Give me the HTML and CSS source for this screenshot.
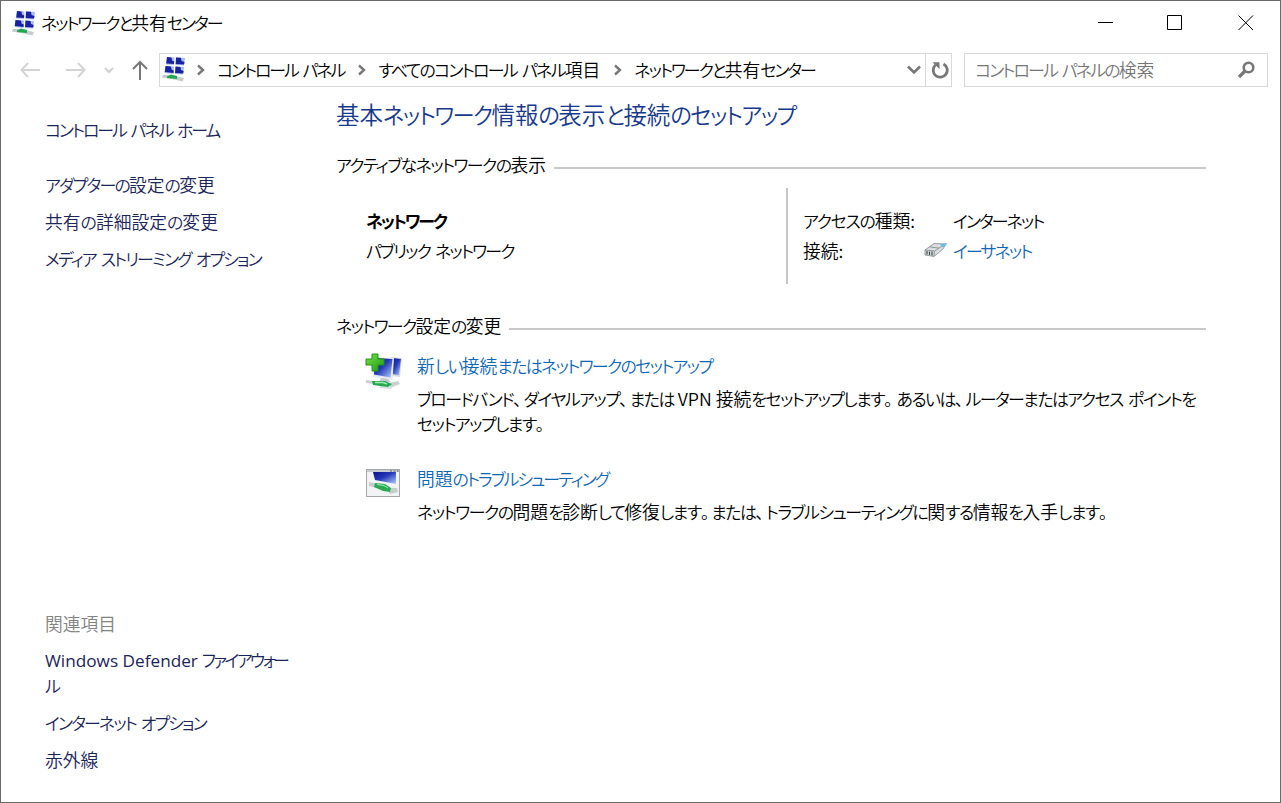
FILE: index.html
```html
<!DOCTYPE html>
<html lang="ja">
<head>
<meta charset="utf-8">
<title>ネットワークと共有センター</title>
<link rel="stylesheet" href="styles.css">
</head>
<body>
<!-- shared icon shapes -->
<svg width="0" height="0" class="defs">
  <defs>
    <linearGradient id="screen" x1="0" y1="0" x2="1" y2="1">
      <stop offset="0" stop-color="#0c1290"/>
      <stop offset=".45" stop-color="#2438b8"/>
      <stop offset="1" stop-color="#b4d0fa"/>
    </linearGradient>
    <linearGradient id="plus" x1="0" y1="0" x2="1" y2="1">
      <stop offset="0" stop-color="#7be04a"/>
      <stop offset="1" stop-color="#149a10"/>
    </linearGradient>
    <symbol id="netcenter" viewBox="0 0 24 26">
      <path d="M5 1L12.500 1.500L12 9L4 8.500ZM14 1.500L23 2L22 9.500L13.500 9Z" fill="#a9bdec"/>
      <path d="M3.500 10L12 10.500L11.500 18L2.500 17ZM13.500 10.500L22 11L21 18.500L13 18Z" fill="#a9bdec"/>
      <path d="M5 1L9.500 1.500L10 4.500L12.200 5.500L12 8L4.200 7.500ZM14 1.500L19 1.800L19.500 5L22.500 6L22 8.500L13.700 8Z" fill="#1822a0"/>
      <path d="M3.500 10L9 10.500L9.500 13.500L11.800 14.500L11.500 17L2.800 16ZM13.500 10.500L18.500 11L19 14L21.700 15L21.200 17.500L13 17Z" fill="#1822a0"/>
      <path d="M1 19L8 19L22 22L20.500 25.500L12 23.500L0 21.500Z" fill="#c6cbcb"/>
      <path d="M5 20.500L9 18.500L15 20L15 23L5 22Z" fill="#20a851"/>
    </symbol>
    <symbol id="chev" viewBox="0 0 10 12">
      <path d="M2 1.500L7 6L2 10.500" fill="none" stroke="#777" stroke-width="2.400"/>
    </symbol>
  </defs>
</svg>

<div class="window">
  <div class="titlebar">
    <svg class="title-icon" width="24" height="26"><use href="#netcenter"/></svg>
    <span class="title t0"><span class="k">ネットワークと</span>共有<span class="k">センター</span></span>
    <div class="buttons">
      <svg width="16" height="16" viewBox="0 0 16 16"><path d="M1 7.500H16" stroke="#000"/></svg>
      <svg width="16" height="16" viewBox="0 0 16 16"><path d="M.5.500H14.500V14.500H.5Z" fill="none" stroke="#000"/></svg>
      <svg width="16" height="16" viewBox="0 0 16 16"><path d="M.5.500L15 15M15 .5L.5 15" stroke="#000"/></svg>
    </div>
  </div>

  <div class="navbar">
    <div class="arrows">
      <svg width="20" height="16" viewBox="0 0 20 16"><path d="M8 1L1.500 8L8 15M1.500 8H20" fill="none" stroke="#d4d4d4" stroke-width="2"/></svg>
      <svg width="20" height="16" viewBox="0 0 20 16"><path d="M12 1L18.500 8L12 15M18.500 8H0" fill="none" stroke="#d4d4d4" stroke-width="2"/></svg>
      <svg width="10" height="7" viewBox="0 0 10 7"><path d="M1 1L5 5L9 1" fill="none" stroke="#d0d0d0" stroke-width="2"/></svg>
      <svg width="16" height="20" viewBox="0 0 16 20"><path d="M1 9L8 2L15 9M8 2V20" fill="none" stroke="#777" stroke-width="2"/></svg>
    </div>
    <div class="address">
      <svg class="addr-icon" width="24" height="26"><use href="#netcenter"/></svg>
      <svg class="sep" width="10" height="12"><use href="#chev"/></svg>
      <span class="crumb c1"><span class="k">コントロール パネル</span></span>
      <svg class="sep" width="10" height="12"><use href="#chev"/></svg>
      <span class="crumb c2"><span class="k">すべてのコントロール パネル</span>項目</span>
      <svg class="sep" width="10" height="12"><use href="#chev"/></svg>
      <span class="crumb t0"><span class="k">ネットワークと</span>共有<span class="k">センター</span></span>
      <svg class="drop" width="14" height="10" viewBox="0 0 14 10"><path d="M1 1.500L7 7.500L13 1.500" fill="none" stroke="#777" stroke-width="2.600"/></svg>
      <div class="refresh">
        <svg width="18" height="18" viewBox="0 0 18 18"><path d="M12.500 3A7 7 0 1 1 4.500 4" fill="none" stroke="#777" stroke-width="2.800"/><path d="M1.500 1.200H8.500V8Z" fill="#777"/></svg>
      </div>
    </div>
    <div class="search">
      <span class="c4"><span class="k">コントロール パネルの</span>検索</span>
      <svg width="18" height="18" viewBox="0 0 18 18"><circle cx="11.500" cy="6.500" r="4.800" fill="none" stroke="#777" stroke-width="2.600"/><path d="M8 10L2 16" stroke="#777" stroke-width="3.200"/></svg>
    </div>
  </div>

  <div class="content">
    <div class="sidebar">
      <a class="home s1"><span class="k">コントロール パネル ホーム</span></a>
      <a class="s2"><span class="k">アダプターの</span>設定<span class="k">の</span>変更</a>
      <a class="s3">共有<span class="k">の</span>詳細設定<span class="k">の</span>変更</a>
      <a class="s4"><span class="k">メディア ストリーミング オプション</span></a>
      <span class="related">関連項目</span>
      <a class="s5"><span class="latin">Windows Defender</span> <span class="k">ファイアウォー</span><br><span class="k">ル</span></a>
      <a class="s6"><span class="k">インターネット オプション</span></a>
      <a>赤外線</a>
    </div>

    <div class="main">
      <h1>基本<span class="k">ネットワーク</span>情報<span class="k">の</span>表示<span class="k">と</span>接続<span class="k">のセットアップ</span></h1>

      <div class="section"><span class="m1"><span class="k">アクティブなネットワークの</span>表示</span><i></i></div>
      <div class="active">
        <div class="network">
          <b class="m2"><span class="k">ネットワーク</span></b>
          <span class="m3"><span class="k">パブリック ネットワーク</span></span>
        </div>
        <div class="details">
          <span class="m4"><span class="k">アクセスの</span>種類:</span>
          <span class="m5"><span class="k">インターネット</span></span>
          <span>接続:</span>
          <span class="conn">
            <svg width="24" height="16" viewBox="0 0 24 16">
              <path d="M1 8L10 1.500L22 2L19 7L10 14.500L1 13Z" fill="#dcdfe1" stroke="#80878c" stroke-width=".8"/>
              <path d="M1 8L10.500 9L20 3M10.500 9L10 14M6 5L15 6" fill="none" stroke="#80878c" stroke-width=".8"/>
              <path d="M3 9V12.500M5.500 9.500V13M8 9.500V13.500" stroke="#454e49" stroke-width="1.200"/>
              <path d="M16 2.500L23.500 1L20.500 5L18 5Z" fill="#6cbde4"/>
            </svg>
            <a class="m7"><span class="k">イーサネット</span></a>
          </span>
        </div>
      </div>

      <div class="section change"><span class="m8"><span class="k">ネットワーク</span>設定<span class="k">の</span>変更</span><i></i></div>
      <div class="task">
        <svg width="38" height="38" viewBox="0 0 38 38">
          <path d="M26 4L37 5L35 24L25 23Z" fill="#d5dbe3"/>
          <path d="M27.500 5L36 6L34 22L26.500 21Z" fill="url(#screen)"/>
          <path d="M9 4L29 5L27.500 27L8 24Z" fill="#e6eaef"/>
          <path d="M10 5L27.500 6L25.500 24.500L9 21.500Z" fill="url(#screen)"/>
          <path d="M16 25L23 26L26 29H14Z" fill="#c5cace"/>
          <path d="M1 27L9 28L9 31L1 30ZM24 30L33 28L35 31L25 35Z" fill="#cbd0d0"/>
          <path d="M15 33L27 34L26 36L15 35Z" fill="#d8dcdc"/>
          <path d="M7 28L20 28L27 31L23 34L8 32Z" fill="#24a750"/>
          <path d="M10 29.500L18 29.500L22 31" fill="none" stroke="#a4edb6" stroke-width="1.500"/>
          <path d="M7 1H13V6H19V12H13V18H7V12H1V6H7Z" fill="url(#plus)" stroke="#279318"/>
        </svg>
        <div>
          <a class="m9">新<span class="k">しい</span>接続<span class="k">またはネットワークのセットアップ</span></a>
          <p class="m10"><span class="k">ブロードバンド<span class="p">、</span>ダイヤルアップ<span class="p">、</span>または</span> VPN 接続<span class="k">をセットアップします<span class="p stop">。</span>あるいは<span class="p">、</span>ルーターまたはアクセス ポイントを</span><br><span class="k">セットアップします<span class="p">。</span></span></p>
        </div>
      </div>
      <div class="task">
        <svg class="trouble" width="38" height="32" viewBox="0 0 38 32">
          <rect x="1.500" y="3.500" width="33" height="27" fill="#f2f3f4" stroke="#a4a8aa"/>
          <path d="M2 5H34" stroke="#c9ccce" stroke-width="2"/>
          <path d="M25 5H27M28.500 5H30.500M32 5H33.500" stroke="#5b6570"/>
          <path d="M8 6H31V18L10 14Z" fill="url(#screen)"/>
          <path d="M4 16L13 18L12 22L4 20ZM22 22L32 22L33 26L25 28Z" fill="#c7cccc"/>
          <path d="M10 17L20 18L26 22L25 26L18 25L9 21Z" fill="#28a952"/>
          <path d="M12 18.500L19 19.500L23 22" fill="none" stroke="#a4edb6"/>
        </svg>
        <div>
          <a class="m12">問題<span class="k">のトラブルシューティング</span></a>
          <p class="m13"><span class="k">ネットワークの</span>問題<span class="k">を</span>診断<span class="k">して</span>修復<span class="k">します<span class="p">。</span>または<span class="p">、</span>トラブルシューティングに</span>関<span class="k">する</span>情報<span class="k">を</span>入手<span class="k">します<span class="p">。</span></span></p>
        </div>
      </div>
    </div>
  </div>
</div>
</body>
</html>
```
FILE: styles.css
```css
* {
  box-sizing: border-box;
}

body {
  margin: 0;
  font-family: "Noto Sans CJK JP", sans-serif;
  font-size: 17.8px;
  line-height: 25px;
  font-weight: 350;
  font-feature-settings: "palt";
  color: #000;
  background: #fff;
}

svg {
  display: block;
  flex-shrink: 0;
}

.defs {
  position: absolute;
}

/* narrow kana, spacing is set per line below */
.k {
  font-size: .95em;
  letter-spacing: var(--k, -1.5px);
  word-spacing: 3px;
}

/* kana punctuation keeps its trailing space */
.p {
  letter-spacing: 2px;
}

.stop {
  letter-spacing: 4px;
}

.t0 { --k: -2px; }
.c1 { --k: -2.05px; }
.c2 { --k: -1.7px; }
.c4 { --k: -1.85px; }
.s1 { --k: -2.05px; }
.s2 { --k: -1.75px; }
.s3 { --k: -1px; }
.s4 { --k: -1.85px; }
.s5 { --k: -2.6px; }
.s6 { --k: -1.85px; }
h1 { --k: -1.6px; }
.m1 { --k: -1.55px; }
.m2 { --k: -2.1px; }
.m3 { --k: -1.8px; }
.m4 { --k: -1.2px; }
.m5 { --k: -1.95px; }
.m7 { --k: -1.9px; }
.m8 { --k: -1.65px; }
.m9 { --k: -1.65px; }
.m10 { --k: -1.5px; }
.m12 { --k: -1.95px; }
.m13 { --k: -1.45px; }

.window {
  width: 1281px;
  height: 803px;
  border: 1px solid #6b6b6b;
  overflow: hidden;
  white-space: nowrap;
}

/* title bar */
.titlebar {
  display: flex;
  align-items: center;
  height: 43px;
  padding-left: 11px;
}

.title {
  margin-left: 5px;
}

.buttons {
  display: flex;
  gap: 54px;
  margin-left: auto;
  padding-right: 26px;
}

.buttons svg:last-child {
  margin-left: 1px;
}

/* navigation row */
.navbar {
  display: flex;
  height: 34px;
  margin-top: 9px;
}

.arrows {
  display: flex;
  align-items: center;
  width: 158px;
  padding-left: 19px;
}

.arrows svg:nth-child(2) { margin-left: 26px; }
.arrows svg:nth-child(3) { margin-left: 18px; }
.arrows svg:nth-child(4) { margin-left: 18px; }

.address {
  display: flex;
  align-items: center;
  width: 793px;
  border: 1px solid #d9d9d9;
}

.addr-icon {
  margin: -2px 0 0 2px;
}

.sep {
  margin-left: 10px;
}

.crumb {
  margin: -2px 0 0 11px;
}

.crumb + .sep {
  margin-left: 13px;
}

.drop {
  margin-left: auto;
}

.refresh {
  display: flex;
  align-items: center;
  justify-content: center;
  align-self: stretch;
  width: 26px;
  margin-left: 4px;
  padding-left: 2px;
  border-left: 1px solid #d9d9d9;
}

.search {
  display: flex;
  align-items: center;
  justify-content: space-between;
  width: 304px;
  margin-left: 12px;
  padding: 0 12px 0 10px;
  border: 1px solid #d9d9d9;
  color: #767676;
}

.search span {
  margin-top: -1px;
}

/* page */
.content {
  display: flex;
}

.sidebar {
  display: flex;
  flex-direction: column;
  gap: 12px;
  width: 335px;
  padding: 30px 0 0 44px;
  color: #1c2559;
}

.home {
  margin-bottom: 18px;
}

.related {
  margin-top: 328px;
  color: #838383;
}

.s5 {
  margin: -1px 0 0;
}

.latin {
  font-family: "Open Sans", sans-serif;
  font-size: 17.2px;
  font-weight: 400;
  line-height: 24px;
}

.main {
  width: 870px;
  padding-top: 11px;
}

h1 {
  margin: 0;
  font-size: 23.500px;
  line-height: 32px;
  font-weight: 350;
  color: #17398c;
}

.section {
  display: flex;
  align-items: center;
  gap: 8px;
  margin-top: 22px;
}

.section i {
  flex: 1;
  height: 2px;
  margin-top: 6px;
  background: #c8c8c8;
}

.active {
  display: flex;
  height: 96px;
  margin-top: 11px;
}

.network {
  display: flex;
  flex-direction: column;
  gap: 5px;
  width: 450px;
  padding: 20px 0 0 30px;
}

.details {
  display: grid;
  grid-template-columns: 150px auto;
  grid-auto-rows: 25px;
  row-gap: 5px;
  align-content: start;
  padding: 20px 0 0 15px;
  border-left: 2px solid #c8c8c8;
}

.conn {
  display: flex;
  gap: 5px;
  margin-left: -29px;
}

.conn svg {
  margin-top: 4px;
}

.change {
  margin-top: 29px;
}

.task {
  display: flex;
  gap: 14px;
  margin: 15px 0 0 29px;
}

.task + .task {
  margin-top: 30px;
}

.task a, .conn a {
  color: #1068b4;
}

.task p {
  margin: 8px 0 0;
}
```
